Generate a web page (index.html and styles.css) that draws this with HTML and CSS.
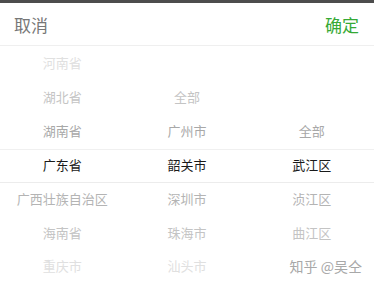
FILE: index.html
```html
<!DOCTYPE html>
<html lang="zh-CN">
<head>
<meta charset="UTF-8">
<meta name="viewport" content="width=device-width, initial-scale=1.0">
<title>地区选择</title>
<link rel="stylesheet" href="styles.css">
</head>
<body>

<div class="picker">
  <div class="toolbar">
    <span class="cancel">取消</span>
    <span class="confirm">确定</span>
  </div>

  <div class="wheel">
    <div class="indicator"></div>

    <ul class="column">
      <li class="r1">河南省</li>
      <li class="r2">湖北省</li>
      <li class="r3">湖南省</li>
      <li class="selected">广东省</li>
      <li class="r5">广西壮族自治区</li>
      <li class="r6">海南省</li>
      <li class="r7">重庆市</li>
    </ul>

    <ul class="column">
      <li class="r1"></li>
      <li class="r2">全部</li>
      <li class="r3">广州市</li>
      <li class="selected">韶关市</li>
      <li class="r5">深圳市</li>
      <li class="r6">珠海市</li>
      <li class="r7">汕头市</li>
    </ul>

    <ul class="column">
      <li class="r1"></li>
      <li class="r2"></li>
      <li class="r3">全部</li>
      <li class="selected">武江区</li>
      <li class="r5">浈江区</li>
      <li class="r6">曲江区</li>
      <li class="r7"></li>
    </ul>

    <div class="watermark">知乎 @吴仝</div>
  </div>
</div>

</body>
</html>
```

FILE: styles.css
```css
body {
  margin: 0;
  font-family: "Noto Sans CJK SC", "Liberation Sans", sans-serif;
  background: #fff;
}
.picker {
  border-top: 3px solid #4d4d4d;
}
.toolbar {
  display: flex;
  justify-content: space-between;
  align-items: center;
  height: 42px;
  padding: 0 15px 0 14px;
  border-bottom: 1px solid #efefef;
  font-size: 17px;
}
.cancel {
  color: #777;
}
.confirm {
  color: #35a935;
}
.wheel {
  position: relative;
  display: grid;
  grid-template-columns: 1fr 1fr 1fr;
}
.column {
  list-style: none;
  margin: 0;
  padding: 0;
}
.column li {
  height: 34px;
  line-height: 34px;
  text-align: center;
  font-size: 13px;
  white-space: nowrap;
}
.column li.r5,
.column li.r6,
.column li.r7 {
  height: 33.5px;
  line-height: 33px;
}
.r1, .r7 {
  color: #e0e0e0;
}
.r2, .r6 {
  color: #c4c4c4;
}
.r3 {
  color: #a8a8a8;
}
.r5 {
  color: #b4b4b4;
}
.selected {
  color: #1a1a1a;
}
.indicator {
  position: absolute;
  left: 0;
  right: 0;
  top: 103px;
  height: 32px;
  border-top: 1px solid #f0f0f0;
  border-bottom: 1px solid #ececec;
}
.watermark {
  position: absolute;
  right: 12px;
  top: 209px;
  font-size: 14px;
  line-height: 22px;
  color: #a8a8a8;
  text-shadow: 0 0 2px #fff;
}
```
